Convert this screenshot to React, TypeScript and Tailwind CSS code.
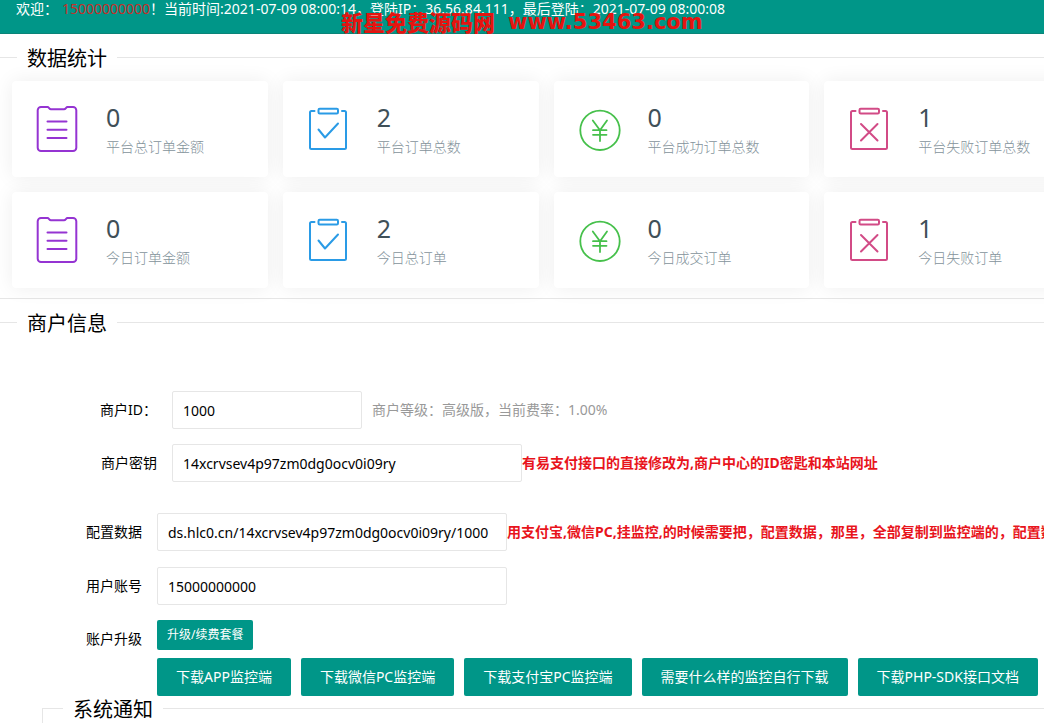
import type { ReactNode } from "react";

const stats = [
  { icon: "list", value: "0", label: "平台总订单金额" },
  { icon: "check", value: "2", label: "平台订单总数" },
  { icon: "yen", value: "0", label: "平台成功订单总数" },
  { icon: "cross", value: "1", label: "平台失败订单总数" },
  { icon: "list", value: "0", label: "今日订单金额" },
  { icon: "check", value: "2", label: "今日总订单" },
  { icon: "yen", value: "0", label: "今日成交订单" },
  { icon: "cross", value: "1", label: "今日失败订单" },
];

const downloads = [
  "下载APP监控端",
  "下载微信PC监控端",
  "下载支付宝PC监控端",
  "需要什么样的监控自行下载",
  "下载PHP-SDK接口文档",
];

const iconColors: Record<string, string> = {
  list: "text-[#9534d2]",
  check: "text-[#2a9be6]",
  yen: "text-[#46c04b]",
  cross: "text-[#d24b86]",
};

function StatIcon({ name }: { name: string }) {
  return (
    <svg
      viewBox="0 0 48 48"
      fill="none"
      stroke="currentColor"
      strokeWidth={name === "yen" ? 1.8 : 2}
      strokeLinecap="round"
      strokeLinejoin="round"
      className={`size-12 shrink-0 ${iconColors[name]}`}
      aria-hidden="true"
    >
      {name === "list" && (
        <>
          <path d="M8 2h6.5c1.6 0 1.6 2.2 3.5 2.2h13c1.9 0 1.9-2.2 3.5-2.2H40a3.3 3.3 0 0 1 3.3 3.3v37.4A3.3 3.3 0 0 1 40 46H8a3.3 3.3 0 0 1-3.3-3.3V5.3A3.3 3.3 0 0 1 8 2z" />
          <path d="M14.5 16.5h19M14.5 24.7h19M14.5 33h19" />
        </>
      )}
      {(name === "check" || name === "cross") && (
        <>
          <path d="M10.5 6H7.5a1.5 1.5 0 0 0-1.5 1.5v35A1.5 1.5 0 0 0 7.5 44h33a1.5 1.5 0 0 0 1.5-1.5v-35A1.5 1.5 0 0 0 40.5 6H38" />
          <rect x="14.5" y="3.8" width="19.5" height="4.7" rx="1.2" />
        </>
      )}
      {name === "check" && <path d="M14.5 24.5l6.5 8 13-14" />}
      {name === "cross" && <path d="M16 19l16.5 16.5M32.5 19L16 35.5" />}
      {name === "yen" && (
        <>
          <circle cx="25" cy="25.3" r="19.7" />
          <path d="M17.8 15.5L25 25.2l7-9.7M18 25.2h13.5M18 29.8h13.5M25 25.2V36" />
        </>
      )}
    </svg>
  );
}

function Legend({ children }: { children: ReactNode }) {
  return <legend className="px-[10px] pt-[3px] text-[20px] leading-[27px]">{children}</legend>;
}

const labelClass = "shrink-0 pr-[15px] text-right";
const inputClass =
  "h-[38px] shrink-0 rounded-xs border border-[#e6e6e6] bg-white px-[10px] outline-none";
const noteClass = "font-bold whitespace-nowrap text-[#e8141c]";

export default function App() {
  return (
    <div className="overflow-x-hidden bg-white font-['Noto_Sans','Noto_Sans_CJK_SC',sans-serif] text-[14px] leading-[20px] text-black">
      {/* Top bar */}
      <header className="relative h-[34px] border-b border-[#0b8478] bg-[#009688] pl-4 leading-[18px] whitespace-nowrap text-white">
        <p>
          欢迎：
          <span className="ml-1 text-[#c4302a]">15000000000</span>
          ！当前时间:2021-07-09 08:00:14，登陆IP：36.56.84.111，最后登陆：2021-07-09 08:00:08
        </p>
        <div className="absolute top-[10px] left-[341px] flex items-center gap-[13px] leading-6 text-[#e51410]">
          <span className="text-[22px] font-black">新星免费源码网</span>
          <span className="font-['DejaVu_Sans',sans-serif] text-[21px] font-bold">www.53463.com</span>
        </div>
      </header>

      <main>
        {/* Stats */}
        <fieldset className="mt-2 min-w-0 border-t border-[#e6e6e6] pl-[17px]">
          <Legend>数据统计</Legend>
          <div className="mt-[9px] -mr-9 -ml-[5px] grid grid-cols-4 gap-[15px]">
            {stats.map((item) => (
              <div
                key={item.label}
                className="flex h-24 items-center gap-[25px] rounded-sm bg-white pl-[21px] shadow-[0_0_20px_rgba(0,0,0,0.07)]"
              >
                <StatIcon name={item.icon} />
                <div className="whitespace-nowrap">
                  <p className="text-[25px] leading-8 text-[#3f5058]">{item.value}</p>
                  <p className="mt-1 font-light text-[#84939b]">{item.label}</p>
                </div>
              </div>
            ))}
          </div>
        </fieldset>

        <hr className="mt-[10px] border-[#e6e6e6]" />

        {/* Merchant info */}
        <fieldset className="mt-2 min-w-0 border-t border-[#e6e6e6] pl-[17px]">
          <Legend>商户信息</Legend>
          <form className="mt-[54px] -ml-[17px]">
            <div className="flex items-center">
              <label htmlFor="merchant-id" className={`w-[172px] ${labelClass}`}>
                商户ID：
              </label>
              <input id="merchant-id" className={`w-[190px] ${inputClass}`} defaultValue="1000" />
              <span className="ml-[10px] text-[#999]">商户等级：高级版，当前费率：1.00%</span>
            </div>
            <div className="mt-[15px] flex items-center">
              <label htmlFor="merchant-key" className={`w-[172px] ${labelClass}`}>
                商户密钥
              </label>
              <input
                id="merchant-key"
                className={`w-[350px] ${inputClass}`}
                defaultValue="14xcrvsev4p97zm0dg0ocv0i09ry"
              />
              <span className={noteClass}>有易支付接口的直接修改为,商户中心的ID密匙和本站网址</span>
            </div>
            <div className="mt-[31px] flex items-center">
              <label htmlFor="config" className={`w-[157px] ${labelClass}`}>
                配置数据
              </label>
              <input
                id="config"
                className={`w-[350px] ${inputClass}`}
                defaultValue="ds.hlc0.cn/14xcrvsev4p97zm0dg0ocv0i09ry/1000"
              />
              <span className={noteClass}>
                用支付宝,微信PC,挂监控,的时候需要把，配置数据，那里，全部复制到监控端的，配置数据
              </span>
            </div>
            <div className="mt-4 flex items-center">
              <label htmlFor="account" className={`w-[157px] ${labelClass}`}>
                用户账号
              </label>
              <input id="account" className={`w-[350px] ${inputClass}`} defaultValue="15000000000" />
            </div>
            <div className="mt-[15px] flex h-[38px] items-start">
              <label htmlFor="upgrade" className={`w-[157px] leading-[38px] ${labelClass}`}>
                账户升级
              </label>
              <button
                id="upgrade"
                type="button"
                className="h-[30px] rounded-xs bg-[#009688] px-[10px] text-[12px] text-white"
              >
                升级/续费套餐
              </button>
            </div>
            <div className="flex gap-[10px] pl-[157px]">
              {downloads.map((text) => (
                <button
                  key={text}
                  type="button"
                  className="h-[38px] shrink-0 rounded-xs bg-[#009688] px-[19px] whitespace-nowrap text-white"
                >
                  {text}
                </button>
              ))}
            </div>
          </form>
        </fieldset>

        {/* Notices */}
        <fieldset className="-mt-[3px] -mr-4 ml-[42px] min-w-0 border border-b-0 border-[#e6e6e6] pl-5">
          <Legend>系统通知</Legend>
        </fieldset>
      </main>
    </div>
  );
}
